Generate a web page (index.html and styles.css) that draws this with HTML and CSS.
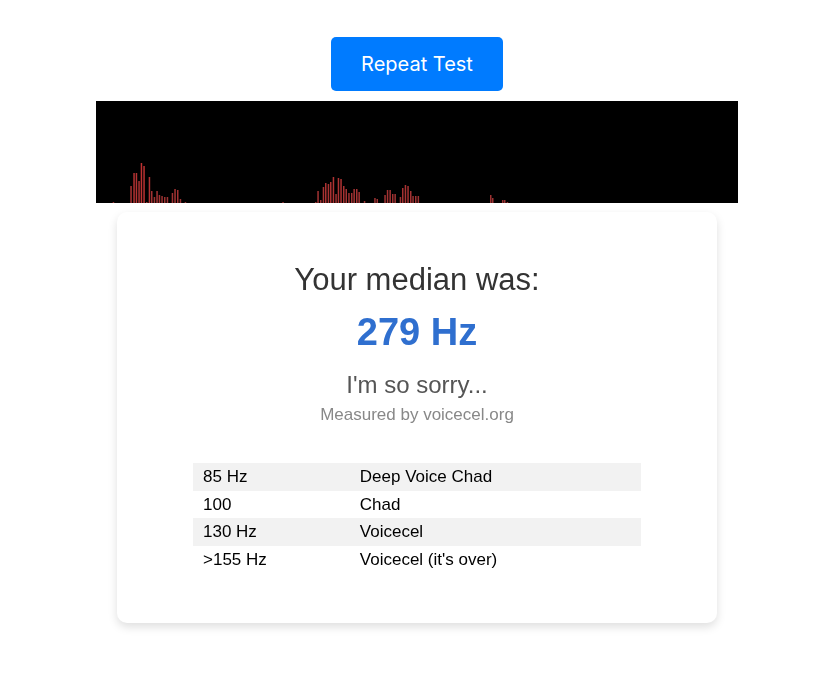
FILE: index.html
```html
<!DOCTYPE html>
<html lang="en">
<head>
  <meta charset="UTF-8">
  <meta name="viewport" content="width=device-width, initial-scale=1.0">
  <title>Voice Pitch Test</title>
  <link rel="stylesheet" href="styles.css">
</head>
<body>
  <div class="page">
    <button class="repeat-btn">Repeat Test</button>

    <!-- Frequency visualiser -->
    <canvas id="visualizer" width="642" height="102"></canvas>

    <!-- Result card -->
    <div class="result-card">
      <h2 class="result-title">Your median was:</h2>
      <p class="result-value">279 Hz</p>
      <p class="result-verdict">I'm so sorry...</p>
      <p class="result-source">Measured by voicecel.org</p>

      <table class="pitch-table">
        <tr><td class="range">85 Hz</td><td>Deep Voice Chad</td></tr>
        <tr><td class="range">100</td><td>Chad</td></tr>
        <tr><td class="range">130 Hz</td><td>Voicecel</td></tr>
        <tr><td class="range">&gt;155 Hz</td><td>Voicecel (it's over)</td></tr>
      </table>
    </div>
  </div>

  <script>
    // last frame of the analyser: [x, height]
    const bars = [
      [16.7, 1],
      [34.3, 17], [37.3, 30], [39.7, 30], [42.3, 22], [44.7, 40], [47.3, 37], [50, 1],
      [52.7, 26], [55, 12], [57.7, 6], [60.3, 12], [62.7, 8], [65.3, 7], [68, 6], [70.7, 6],
      [75.7, 10], [78.3, 14], [81, 13], [83.7, 4], [88.7, 1],
      [186.3, 1],
      [219, 1], [221.3, 12], [224, 3], [226.7, 16], [229, 20], [231.7, 19], [234, 21],
      [236.7, 26], [239.3, 9], [241.7, 25], [244.3, 24], [247, 17], [249.5, 14], [252.2, 10],
      [255, 10], [257.4, 14], [260, 14], [262.4, 11], [267.8, 2],
      [278.2, 5], [280.5, 4],
      [288.3, 8], [290.8, 13], [293.4, 13], [296, 9], [298.4, 9],
      [303.7, 6], [306, 15], [308.7, 18], [311.3, 17], [314, 12], [316.3, 7], [319, 7], [321.6, 7],
      [394, 8], [396, 5], [406, 3], [408, 3], [410.7, 1]
    ];

    function drawBars() {
      const canvas = document.getElementById('visualizer');
      const ctx = canvas.getContext('2d');
      ctx.fillStyle = '#000';
      ctx.fillRect(0, 0, canvas.width, canvas.height);

      bars.forEach(([x, h]) => {
        ctx.fillStyle = `rgb(${150 + h}, 50, 50)`;
        ctx.fillRect(x, canvas.height - h, 1.5, h);
      });
    }

    drawBars();
  </script>
</body>
</html>
```

FILE: styles.css
```css
body { margin: 0; background: #fff; font-family: "Liberation Sans", Arial, sans-serif; color: #333; }
.page { display: flex; flex-direction: column; align-items: center; padding: 37px 0 40px 4px; }

.repeat-btn { font-family: Inter, "Liberation Sans", sans-serif; font-size: 20px; line-height: 24px; padding: 15px 30px; background: #007bff; color: #fff; border: none; border-radius: 5px; cursor: pointer; }
.repeat-btn:hover { background: #0069d9; }

#visualizer { display: block; margin-top: 10px; background: #000; }

.result-card { width: 600px; margin-top: 9px; padding: 50px 0 50px; background: #fff; border-radius: 10px; box-shadow: 0 4px 10px rgba(0, 0, 0, 0.13); text-align: center; }
.result-title { margin: 0; font-size: 31px; font-weight: normal; color: #333; }
.result-value { margin: 13px 0 0; font-size: 38px; font-weight: bold; color: #2f6fcf; }
.result-verdict { margin: 17px 0 0; font-size: 24px; color: #555; }
.result-source { margin: 6px 0 0; font-size: 17px; color: #888; }

.pitch-table { width: 448px; margin: 38px auto 0; border-collapse: collapse; text-align: left; font-size: 17px; color: #000; }
.pitch-table td { padding: 4px 10px; line-height: 19.5px; }
.pitch-table td.range { width: 35%; }
.pitch-table tr:nth-child(odd) { background: #f2f2f2; }
```
